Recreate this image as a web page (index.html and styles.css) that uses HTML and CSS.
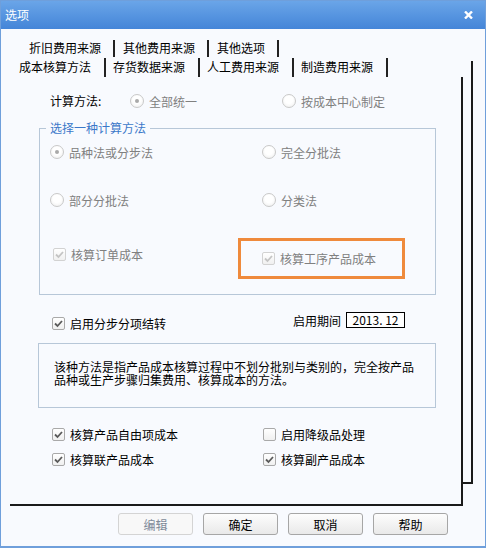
FILE: index.html
```html
<!doctype html>
<html lang="zh-CN">
<head>
<meta charset="UTF-8">
<title>选项</title>
<link rel="stylesheet" href="styles.css">
</head>
<body>
<div class="window">
    <div class="titlebar">
        <span>选项</span>
        <svg class="close" width="9" height="8" viewBox="0 0 9 8"><path d="M1 0.5 L8 7.5 M8 0.5 L1 7.5" stroke="#fff" stroke-width="2.4"/></svg>
    </div>
    <div class="tabs tabsBack">
        <span class="tab">折旧费用来源</span><span class="tab">其他费用来源</span><span class="tab">其他选项</span>
    </div>
    <div class="tabs tabsFront">
        <span class="tab active">成本核算方法</span><span class="tab">存货数据来源</span><span class="tab">人工费用来源</span><span class="tab">制造费用来源</span>
    </div>
    <div class="page">
        <div class="calcRow">
            <span class="calcLabel">计算方法:</span>
            <label class="radio disabled checked calcFirst"><span class="dot"></span>全部统一</label>
            <label class="radio disabled"><span class="dot"></span>按成本中心制定</label>
        </div>
        <fieldset class="group">
            <legend>选择一种计算方法</legend>
            <div class="groupGrid">
                <label class="radio disabled checked"><span class="dot"></span>品种法或分步法</label>
                <label class="radio disabled"><span class="dot"></span>完全分批法</label>
                <label class="radio disabled"><span class="dot"></span>部分分批法</label>
                <label class="radio disabled"><span class="dot"></span>分类法</label>
                <label class="check disabled orderCheck"><span class="box"><svg width="11" height="11" viewBox="0 0 11 11"><path d="M2 5.5 L4.5 8 L9 3" fill="none" stroke-width="1.8"/></svg></span>核算订单成本</label>
                <div class="highlight">
                    <label class="check disabled"><span class="box"><svg width="11" height="11" viewBox="0 0 11 11"><path d="M2 5.5 L4.5 8 L9 3" fill="none" stroke-width="1.8"/></svg></span>核算工序产品成本</label>
                </div>
            </div>
        </fieldset>
        <div class="periodRow">
            <label class="check"><span class="box"><svg width="11" height="11" viewBox="0 0 11 11"><path d="M2 5.5 L4.5 8 L9 3" fill="none" stroke-width="1.8"/></svg></span>启用分步分项结转</label>
            <span class="period">启用期间<span class="periodValue">2013. 12</span></span>
        </div>
        <div class="desc">该种方法是指产品成本核算过程中不划分批别与类别的，完全按产品品种或生产步骤归集费用、核算成本的方法。</div>
        <div class="optGrid">
            <label class="check"><span class="box"><svg width="11" height="11" viewBox="0 0 11 11"><path d="M2 5.5 L4.5 8 L9 3" fill="none" stroke-width="1.8"/></svg></span>核算产品自由项成本</label>
            <label class="check"><span class="box"></span>启用降级品处理</label>
            <label class="check"><span class="box"><svg width="11" height="11" viewBox="0 0 11 11"><path d="M2 5.5 L4.5 8 L9 3" fill="none" stroke-width="1.8"/></svg></span>核算联产品成本</label>
            <label class="check"><span class="box"><svg width="11" height="11" viewBox="0 0 11 11"><path d="M2 5.5 L4.5 8 L9 3" fill="none" stroke-width="1.8"/></svg></span>核算副产品成本</label>
        </div>
    </div>
    <div class="buttons">
        <button class="button" disabled>编辑</button>
        <button class="button">确定</button>
        <button class="button">取消</button>
        <button class="button">帮助</button>
    </div>
</div>
</body>
</html>
```

FILE: styles.css
```css
*,
*:after,
*:before {
    box-sizing: border-box;
}
body {
    background: #fff;
    font-family: "Noto Sans CJK SC", "Liberation Sans", sans-serif;
    font-size: 12px;
    margin: 0;
}
.window {
    background: #f8fafe;
    border: 1px solid #6f9fdb;
    border-bottom-width: 2px;
    height: 548px;
    width: 486px;
}
.titlebar {
    align-items: center;
    background: linear-gradient(#6aa5e8, #4485d8);
    color: #fff;
    display: flex;
    height: 28px;
    justify-content: space-between;
    padding: 0 12px 1px 4px;
}
.tabs {
    display: flex;
}
.tabsBack {
    height: 17px;
    margin-top: 11px;
    padding-left: 20px;
}
.tabsFront {
    height: 19px;
    margin-top: 1px;
    padding-left: 10px;
}
.tab {
    border-right: 2px solid #222;
    line-height: 16px;
    padding: 0 12px 0 8px;
}
.tabsFront .tab {
    line-height: 17px;
    padding: 0 13px 0 7px;
}
.tabsFront .tab.active {
    padding: 0 13px 0 8px;
}
.page {
    border-bottom: 2px solid #1a1a1a;
    border-right: 2px solid #1a1a1a;
    height: 429px;
    margin-left: 9px;
    padding-top: 14px;
    position: relative;
    width: 453px;
}
.page:after {
    border-bottom: 2px solid #1a1a1a;
    border-right: 2px solid #1a1a1a;
    bottom: 20px;
    content: "";
    pointer-events: none;
    position: absolute;
    right: -12px;
    top: -16px;
    width: 12px;
}
.radio,
.check {
    align-items: center;
    display: flex;
    gap: 5px;
    height: 20px;
    white-space: nowrap;
}
.disabled {
    color: #808080;
}
.dot {
    background: radial-gradient(circle at 50% 40%, #fff 40%, #ececec 100%);
    border: 1px solid #c9c9c9;
    border-radius: 50%;
    flex: none;
    height: 14px;
    position: relative;
    width: 14px;
}
.checked .dot:after {
    background: #a9a9a9;
    border-radius: 50%;
    content: "";
    height: 4px;
    left: 4px;
    position: absolute;
    top: 4px;
    width: 4px;
}
.box {
    align-items: center;
    background: linear-gradient(#fff, #f0f0f0);
    border: 1px solid #a9a9a9;
    border-radius: 2px;
    display: flex;
    flex: none;
    height: 13px;
    justify-content: center;
    width: 13px;
}
.box svg {
    stroke: #5a5a5a;
}
.disabled .box {
    border-color: #d2d2d2;
}
.disabled .box svg {
    stroke: #c4c4c4;
}
.calcRow {
    display: flex;
    height: 20px;
    padding-left: 40px;
}
.calcLabel {
    line-height: 20px;
    width: 80px;
}
.calcFirst {
    width: 152px;
}
.group {
    border: 1px solid #b7c7d8;
    margin: 9px 0 0 29px;
    min-inline-size: 0;
    padding: 6px 0 15px 10px;
    width: 397px;
}
.group legend {
    color: #3b78c9;
    line-height: 16px;
    margin-left: -4px;
    padding: 0 4px;
}
.groupGrid {
    display: grid;
    grid-template-columns: 212px 160px;
    grid-template-rows: 20px 20px 41px;
    row-gap: 28px;
}
.orderCheck {
    align-self: start;
    margin-top: 6px;
    padding-left: 3px;
}
.highlight {
    align-items: center;
    border: 3px solid #ef8a3c;
    display: flex;
    height: 41px;
    margin-left: -24px;
    padding-left: 21px;
    width: 167px;
}
.periodRow {
    align-items: center;
    display: flex;
    height: 20px;
    justify-content: space-between;
    margin-top: 18px;
    padding: 0 56px 0 42px;
}
.period {
    align-items: center;
    display: flex;
    gap: 5px;
    margin-bottom: 6px;
}
.periodValue {
    background: #fff;
    border: 1px solid #000;
    height: 16px;
    line-height: 14px;
    text-align: center;
    width: 59px;
}
.desc {
    border: 1px solid #b7c7d8;
    height: 65px;
    line-height: 13px;
    margin: 10px 0 0 28px;
    padding: 16px 20px 0 15px;
    width: 398px;
}
.optGrid {
    display: grid;
    grid-template-columns: 211px 160px;
    grid-template-rows: 20px 20px;
    margin-top: 16px;
    padding-left: 42px;
    row-gap: 5px;
}
.buttons {
    display: flex;
    gap: 10px;
    justify-content: flex-end;
    margin-top: 7px;
    padding-right: 37px;
}
.button {
    background: linear-gradient(#fdfdfd, #e9e9e9);
    border: 1px solid #a6a6a6;
    border-radius: 3px;
    color: #000;
    font-family: "Noto Sans CJK SC", "Liberation Sans", sans-serif;
    font-size: 12px;
    height: 22px;
    padding: 0;
    width: 75px;
}
.button:disabled {
    background: #f8f8f8;
    border-color: #d4d4d4;
    color: #7d8a99;
}
```
